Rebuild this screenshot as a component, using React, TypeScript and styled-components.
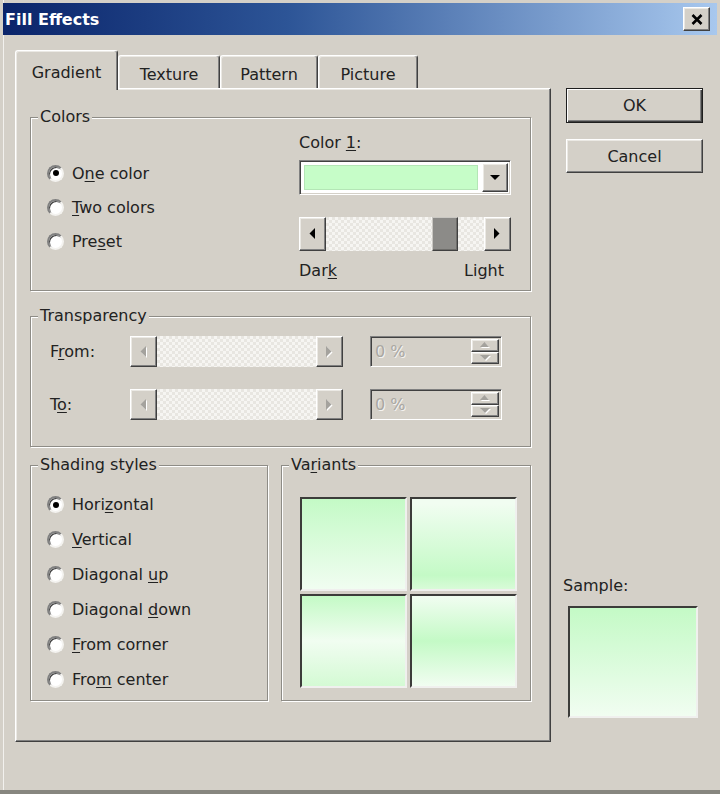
import React from "react";
import styled, { createGlobalStyle, css } from "styled-components";

const face = "#d4d0c8";
const shadow = "#808080";
const darkShadow = "#404040";
const hilite = "#ffffff";
const green = "#c4fac6";
const pale = "#f1fdf1";

const GlobalStyle = createGlobalStyle`
  html, body {
    margin: 0;
    padding: 0;
    background: ${face};
  }
  body {
    font-family: "DejaVu Sans", Verdana, sans-serif;
    font-size: 16px;
    color: #222;
  }
  * {
    box-sizing: border-box;
  }
`;

const raised = css`
  border: 1px solid;
  border-color: ${hilite} ${darkShadow} ${darkShadow} ${hilite};
  box-shadow: inset -1px -1px 0 ${shadow}, inset 1px 1px 0 #ebe9e4;
  background: ${face};
`;

const sunken = css`
  border: 1px solid;
  border-color: ${shadow} ${hilite} ${hilite} ${shadow};
  box-shadow: inset 1px 1px 0 ${darkShadow}, inset -1px -1px 0 ${face};
`;

const dither = css`
  background-color: #efeeea;
  background-image: repeating-conic-gradient(#f6f5f2 0 25%, #e8e6e1 0 50%);
  background-size: 6px 6px;
`;

type ArrowDir = "left" | "right" | "up" | "down";

const arrowShapes: Record<ArrowDir, { w: number; h: number; pts: string }> = {
  left: { w: 6, h: 11, pts: "6,0 6,11 0.5,5.5" },
  right: { w: 6, h: 11, pts: "0,0 0,11 5.5,5.5" },
  up: { w: 9, h: 5, pts: "0,5 9,5 4.5,0" },
  down: { w: 10, h: 5, pts: "0,0 10,0 5,5" },
};

function Arrow({ dir, disabled }: { dir: ArrowDir; disabled?: boolean }) {
  const s = arrowShapes[dir];
  return (
    <svg width={s.w + 1} height={s.h + 1} viewBox={`0 0 ${s.w + 1} ${s.h + 1}`}>
      {disabled && <polygon points={s.pts} fill="#fff" transform="translate(1 1)" />}
      <polygon points={s.pts} fill={disabled ? "#a4a29d" : "#000"} />
    </svg>
  );
}

function DisabledScroll() {
  return (
    <ScrollBar $h={31} $w={213}>
      <ArrowButton $w={27}>
        <Arrow dir="left" disabled />
      </ArrowButton>
      <Track />
      <ArrowButton $w={27}>
        <Arrow dir="right" disabled />
      </ArrowButton>
    </ScrollBar>
  );
}

function PercentField() {
  return (
    <PercentBox>
      <PercentText>0 %</PercentText>
      <Spinner>
        <SpinButton><Arrow dir="up" disabled /></SpinButton>
        <SpinButton><Arrow dir="down" disabled /></SpinButton>
      </Spinner>
    </PercentBox>
  );
}

export default function App() {
  return (
    <>
      <GlobalStyle />
      <Window>
        <TitleBar>
          <Title>Fill Effects</Title>
          <CloseButton>
            <svg width="12" height="11" viewBox="0 0 12 11">
              <path d="M1.5 1 L10.5 10 M10.5 1 L1.5 10" stroke="#000" strokeWidth="2.6" />
            </svg>
          </CloseButton>
        </TitleBar>

        <Body>
          <Main>
            <TabStrip>
              <Tab $active $w={103}>Gradient</Tab>
              <Tab $w={102}>Texture</Tab>
              <Tab $w={98}>Pattern</Tab>
              <Tab $w={100}>Picture</Tab>
            </TabStrip>

            <Panel>
              <Group $h={184}>
                <Legend>Colors</Legend>
                <ColorsBody>
                  <RadioList $top={29} $row={34}>
                    <RadioRow>
                      <Radio $on />
                      <span>O<Key>n</Key>e color</span>
                    </RadioRow>
                    <RadioRow>
                      <Radio />
                      <span><Key>T</Key>wo colors</span>
                    </RadioRow>
                    <RadioRow>
                      <Radio />
                      <span>Pre<Key>s</Key>et</span>
                    </RadioRow>
                  </RadioList>

                  <ColorColumn>
                    <FieldLabel>Color <Key>1</Key>:</FieldLabel>
                    <Combo>
                      <Swatch />
                      <DropButton>
                        <Arrow dir="down" />
                      </DropButton>
                    </Combo>
                    <ScrollBar $h={34} $w={212}>
                      <ArrowButton $w={27}>
                        <Arrow dir="left" />
                      </ArrowButton>
                      <Track>
                        <Thumb style={{ left: `${0.8 * 100}%`, marginLeft: -0.8 * 26 }} />
                      </Track>
                      <ArrowButton $w={27}>
                        <Arrow dir="right" />
                      </ArrowButton>
                    </ScrollBar>
                    <ScaleLabels>
                      <span>Dar<Key>k</Key></span>
                      <span>Light</span>
                    </ScaleLabels>
                  </ColorColumn>
                </ColorsBody>
              </Group>

              <Group $h={141} $gap={15}>
                <Legend>Transparency</Legend>
                <TransBody>
                  <TransRow>
                    <RowLabel>F<Key>r</Key>om:</RowLabel>
                    <DisabledScroll />
                    <PercentField />
                  </TransRow>
                  <TransRow>
                    <RowLabel>T<Key>o</Key>:</RowLabel>
                    <DisabledScroll />
                    <PercentField />
                  </TransRow>
                </TransBody>
              </Group>

              <BottomRow>
                <Group $h={246} $w={238}>
                  <Legend>Shading styles</Legend>
                  <RadioList $top={12} $row={35} $left={16}>
                    <RadioRow>
                      <Radio $on />
                      <span>Hori<Key>z</Key>ontal</span>
                    </RadioRow>
                    <RadioRow>
                      <Radio />
                      <span><Key>V</Key>ertical</span>
                    </RadioRow>
                    <RadioRow>
                      <Radio />
                      <span>Diagonal <Key>u</Key>p</span>
                    </RadioRow>
                    <RadioRow>
                      <Radio />
                      <span>Diagonal <Key>d</Key>own</span>
                    </RadioRow>
                    <RadioRow>
                      <Radio />
                      <span><Key>F</Key>rom corner</span>
                    </RadioRow>
                    <RadioRow>
                      <Radio />
                      <span>Fro<Key>m</Key> center</span>
                    </RadioRow>
                  </RadioList>
                </Group>

                <Group $h={246} $w={250}>
                  <Legend>Va<Key>r</Key>iants</Legend>
                  <VariantGrid>
                    <Variant $fill={`linear-gradient(to bottom, ${green}, ${pale})`} />
                    <Variant $fill={`linear-gradient(to bottom, ${pale} 5%, ${green} 85%, #d8fbd8)`} />
                    <Variant $fill={`linear-gradient(to bottom, ${green}, ${pale} 50%, #d4fad4)`} />
                    <Variant $fill={`linear-gradient(to bottom, ${pale}, ${green} 50%, ${pale})`} />
                  </VariantGrid>
                </Group>
              </BottomRow>
            </Panel>
          </Main>

          <Side>
            <PushButton $default>OK</PushButton>
            <PushButton>Cancel</PushButton>
            <SampleArea>
              <FieldLabel>Sample:</FieldLabel>
              <SampleBox />
            </SampleArea>
          </Side>
        </Body>
      </Window>
    </>
  );
}

const Window = styled.div`
  width: 720px;
  height: 794px;
  padding: 3px 3px 0 3px;
  border-bottom: 4px solid #87867f;
  background: ${face};
  box-shadow: inset 3px 0 0 ${face}, inset 4px 0 0 #f2f1ee;
  display: flex;
  flex-direction: column;
`;

const TitleBar = styled.div`
  height: 32px;
  flex: none;
  display: flex;
  align-items: center;
  justify-content: space-between;
  padding: 0 7px 0 2px;
  background: linear-gradient(to right, #0a246a 0%, #2d5597 40%, #a8c8ee 100%);
`;

const Title = styled.div`
  color: #fff;
  font-weight: bold;
  font-size: 16px;
`;

const CloseButton = styled.div`
  width: 27px;
  height: 24px;
  display: flex;
  align-items: center;
  justify-content: center;
  ${raised}
`;

const Body = styled.div`
  display: flex;
  align-items: stretch;
  padding: 15px 0 0 12px;
`;

const Main = styled.div`
  width: 536px;
  display: flex;
  flex-direction: column;
`;

const TabStrip = styled.div`
  height: 38px;
  display: flex;
  align-items: flex-end;
  position: relative;
  z-index: 1;
`;

const Tab = styled.div<{ $active?: boolean; $w: number }>`
  width: ${(p) => p.$w}px;
  height: ${(p) => (p.$active ? 40 : 33)}px;
  margin-bottom: ${(p) => (p.$active ? -2 : 0)}px;
  padding-top: ${(p) => (p.$active ? 3 : 4)}px;
  display: flex;
  align-items: center;
  justify-content: center;
  background: ${face};
  border-top: 1px solid ${hilite};
  border-left: 1px solid ${hilite};
  border-right: 1px solid ${darkShadow};
  border-radius: 3px 3px 0 0;
  box-shadow: inset -1px 0 0 ${shadow}, inset 1px 1px 0 #ebe9e4;
`;

const Panel = styled.div`
  height: 654px;
  display: flex;
  flex-direction: column;
  padding: 18px 19px 0 14px;
  border: 1px solid;
  border-color: ${hilite} ${darkShadow} ${darkShadow} ${hilite};
  box-shadow: inset -1px -1px 0 ${shadow}, inset 1px 1px 0 #ebe9e4;
`;

const Group = styled.fieldset<{ $h: number; $w?: number; $gap?: number }>`
  margin: ${(p) => p.$gap ?? 0}px 0 0 0;
  padding: 0;
  min-width: 0;
  height: ${(p) => p.$h}px;
  width: ${(p) => (p.$w ? `${p.$w}px` : "auto")};
  border: 1px solid #8e8c86;
  box-shadow: 1px 1px 0 ${hilite}, inset 1px 1px 0 ${hilite};
`;

const Legend = styled.legend`
  margin-left: 7px;
  padding: 0 2px;
  line-height: 20px;
  background: ${face};
`;

const Key = styled.span`
  text-decoration: underline;
  text-underline-offset: 2px;
`;

const ColorsBody = styled.div`
  display: grid;
  grid-template-columns: 1fr 212px;
  padding: 0 19px 0 16px;
`;

const RadioList = styled.div<{ $top: number; $row: number; $left?: number }>`
  display: flex;
  flex-direction: column;
  padding-top: ${(p) => p.$top}px;
  padding-left: ${(p) => p.$left ?? 0}px;

  & > label {
    height: ${(p) => p.$row}px;
  }
`;

const RadioRow = styled.label`
  display: flex;
  align-items: center;
  gap: 8px;
  white-space: nowrap;
`;

const Radio = styled.span<{ $on?: boolean }>`
  flex: none;
  width: 17px;
  height: 17px;
  border-radius: 50%;
  border: 2px solid;
  border-color: ${shadow} #f4f3f0 #f4f3f0 ${shadow};
  background: #fff;
  box-shadow: inset 1px 1px 0 ${darkShadow};
  display: flex;
  align-items: center;
  justify-content: center;

  &::after {
    content: "";
    width: 6px;
    height: 6px;
    border-radius: 50%;
    background: ${(p) => (p.$on ? "#000" : "transparent")};
  }
`;

const ColorColumn = styled.div`
  display: flex;
  flex-direction: column;
  padding-top: 6px;
`;

const FieldLabel = styled.div`
  line-height: 20px;
  white-space: nowrap;
`;

const Combo = styled.div`
  height: 35px;
  margin-top: 7px;
  display: flex;
  padding: 2px;
  background: #fff;
  ${sunken}
`;

const Swatch = styled.div`
  flex: 1;
  margin: 2px 4px 2px 2px;
  background: #c6fdc8;
  border: 1px solid #b4e6b6;
`;

const DropButton = styled.div`
  width: 26px;
  display: flex;
  align-items: center;
  justify-content: center;
  ${raised}
`;

const ScrollBar = styled.div<{ $h: number; $w: number }>`
  flex: none;
  width: ${(p) => p.$w}px;
  height: ${(p) => p.$h}px;
  display: flex;

  ${ColorColumn} & {
    margin-top: 22px;
  }
`;

const ArrowButton = styled.div<{ $w: number }>`
  flex: none;
  width: ${(p) => p.$w}px;
  display: flex;
  align-items: center;
  justify-content: center;
  ${raised}
`;

const Track = styled.div`
  flex: 1;
  position: relative;
  ${dither}
`;

const Thumb = styled.div`
  position: absolute;
  top: 0;
  bottom: 0;
  width: 26px;
  background: #8c8b88;
  border: 1px solid;
  border-color: #c9c7c2 ${darkShadow} ${darkShadow} #c9c7c2;
  box-shadow: inset -1px -1px 0 #6d6c69;
`;

const ScaleLabels = styled.div`
  margin-top: 10px;
  line-height: 20px;
  display: flex;
  justify-content: space-between;
  padding-right: 7px;
`;

const TransBody = styled.div`
  display: flex;
  flex-direction: column;
  gap: 22px;
  padding: 10px 0 0 19px;
`;

const TransRow = styled.div`
  height: 31px;
  display: flex;
  align-items: center;
`;

const RowLabel = styled.div`
  width: 80px;
  flex: none;
`;

const PercentBox = styled.div`
  width: 132px;
  height: 31px;
  margin-left: 27px;
  display: flex;
  align-items: center;
  padding: 2px;
  background: ${face};
  ${sunken}
`;

const PercentText = styled.div`
  flex: 1;
  padding-left: 2px;
  color: #a9a7a2;
  text-shadow: 1px 1px 0 #f4f3f0;
`;

const Spinner = styled.div`
  width: 28px;
  align-self: stretch;
  display: flex;
  flex-direction: column;
`;

const SpinButton = styled.div`
  flex: 1;
  display: flex;
  align-items: center;
  justify-content: center;
  ${raised}
`;

const BottomRow = styled.div`
  display: flex;
  gap: 13px;
  margin-top: 8px;
`;

const VariantGrid = styled.div`
  display: grid;
  grid-template-columns: repeat(2, 107px);
  grid-template-rows: repeat(2, 94px);
  gap: 3px;
  padding: 22px 0 0 18px;
`;

const Variant = styled.div<{ $fill: string }>`
  background: ${(p) => p.$fill};
  border: 2px solid;
  border-color: #3c3c3a #f0f0ee #f0f0ee #3c3c3a;
`;

const Side = styled.div`
  width: 142px;
  margin-left: 12px;
  display: flex;
  flex-direction: column;
  padding: 38px 0 24px 0;
  gap: 16px;
`;

const PushButton = styled.div<{ $default?: boolean }>`
  width: 137px;
  height: ${(p) => (p.$default ? 35 : 34)}px;
  margin-left: 3px;
  display: flex;
  align-items: center;
  justify-content: center;
  ${(p) =>
    p.$default
      ? css`
          border: 1px solid #1e1e1e;
          background: ${face};
          box-shadow: inset 1px 1px 0 ${hilite}, inset -1px -1px 0 ${darkShadow},
            inset -2px -2px 0 ${shadow};
        `
      : raised}
`;

const SampleArea = styled.div`
  margin-top: auto;
  display: flex;
  flex-direction: column;
  gap: 10px;
`;

const SampleBox = styled.div`
  width: 130px;
  height: 112px;
  margin-left: 5px;
  border: 2px solid;
  border-color: #3c3c3a #f0f0ee #f0f0ee #3c3c3a;
  background: linear-gradient(to bottom, ${green}, ${pale});
`;
